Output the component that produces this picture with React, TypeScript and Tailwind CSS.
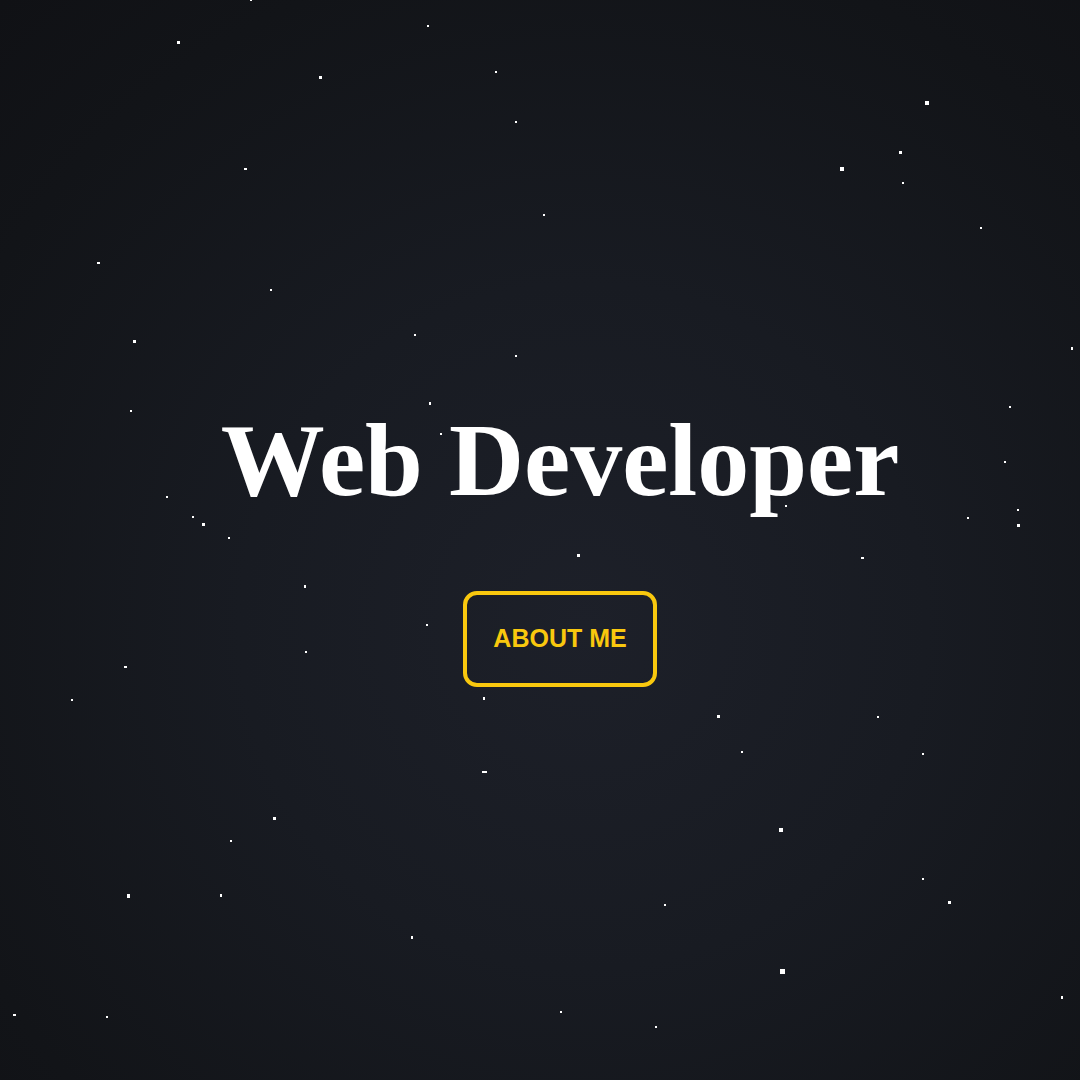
import React from "react";

type Star = [number, number, number, number?];

const stars: Star[] = [
  [178, 42, 3], [320, 77, 3], [251, 0, 2], [428, 26, 2], [496, 72, 2], [516, 122, 2],
  [245, 169, 3, 2], [544, 215, 2], [98, 263, 3, 2], [271, 290, 2], [134, 341, 3],
  [415, 335, 2], [516, 356, 2], [131, 411, 2], [430, 403, 2, 3], [441, 434, 2],
  [927, 103, 4], [900, 152, 3], [842, 169, 4], [903, 183, 2], [981, 228, 2],
  [1072, 348, 2, 3], [1010, 407, 2], [1005, 462, 2], [167, 497, 2], [193, 517, 2],
  [203, 524, 3], [229, 538, 2], [968, 518, 2], [1018, 510, 2], [1018, 525, 3],
  [578, 555, 3], [862, 558, 3, 2], [305, 586, 2, 3], [427, 625, 2], [125, 667, 3, 2],
  [306, 652, 2], [72, 700, 2], [484, 698, 2, 3], [718, 716, 3], [878, 717, 2],
  [742, 752, 2], [923, 754, 2], [484, 772, 5, 2], [274, 818, 3], [231, 841, 2],
  [781, 830, 4], [128, 896, 3, 4], [221, 895, 2, 3], [923, 879, 2], [949, 902, 3],
  [665, 905, 2], [412, 937, 2, 3], [782, 971, 5], [14, 1015, 3, 2], [107, 1017, 2],
  [561, 1012, 2], [656, 1027, 2], [1062, 997, 2, 3], [786, 506, 2],
];

export default function App() {
  return (
    <div className="relative w-full h-[1080px] overflow-hidden bg-[radial-gradient(circle_at_54%_58%,#1d2029_0%,#181b22_40%,#121418_80%,#101115_100%)]">
      {stars.map(([x, y, w, h], i) => (
        <span
          key={i}
          className="absolute bg-white"
          style={{
            left: Math.round(x - w / 2),
            top: Math.round(y - (h ?? w) / 2),
            width: w,
            height: h ?? w,
          }}
        />
      ))}
      <div className="relative flex flex-col items-center pl-[40px] pt-[408px]">
        <h1 className="text-white font-bold text-[104px] leading-none font-['Liberation_Serif','Times_New_Roman',serif]">
          Web Developer
        </h1>
        <button className="mt-[79px] w-[194px] h-[96px] flex items-center justify-center rounded-[14px] border-[4px] border-[#f9c80e] text-[#f9c80e] font-bold text-[25px] bg-transparent font-['Liberation_Sans',Arial,sans-serif]">
          ABOUT ME
        </button>
      </div>
    </div>
  );
}
